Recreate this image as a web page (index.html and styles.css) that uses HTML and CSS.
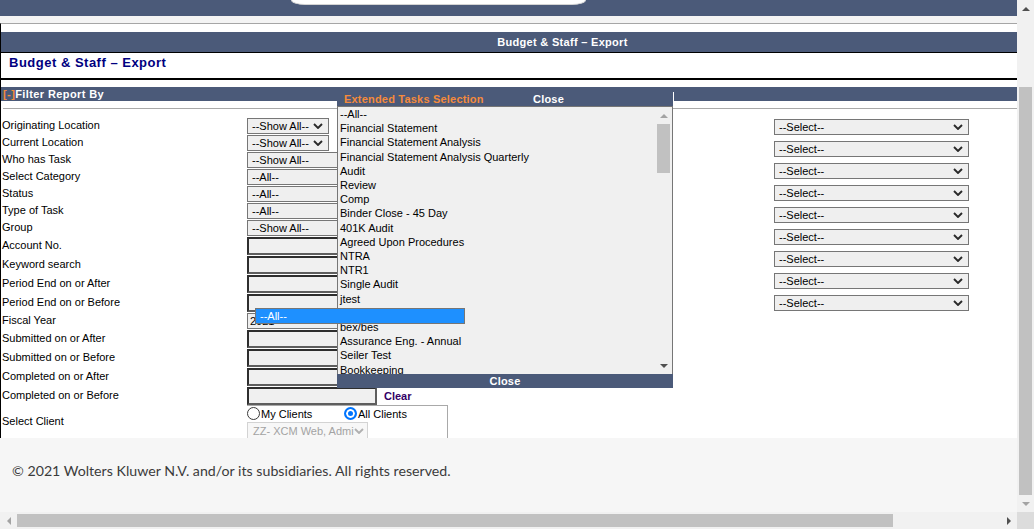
FILE: index.html
```html
<!DOCTYPE html>
<html>
<head>
<meta charset="utf-8">
<title>Budget &amp; Staff – Export</title>
<link rel="stylesheet" href="styles.css">
</head>
<body>
<div class="viewport">
  <div class="page">
    <div class="topbar"><div class="searchbox"></div></div>
    <div class="band"></div>
    <div class="content">
      <div class="titlebar">Budget &amp; Staff – Export</div>
      <div class="heading">Budget &amp; Staff – Export</div>
      <div class="filterbar"><span class="toggle">[-]</span>Filter Report By</div>
      <div class="filterline"></div>
      <div class="filter-body">
        <div class="form-grid">
          <div class="lbl">Originating Location</div>
          <div class="ctl"><div class="select w82"><span>--Show All--</span><svg class="chev" viewBox="0 0 10 6" width="10" height="6"><polyline points="1,1 5,5 9,1"/></svg></div></div>
          <div class="lbl">Current Location</div>
          <div class="ctl"><div class="select w82"><span>--Show All--</span><svg class="chev" viewBox="0 0 10 6" width="10" height="6"><polyline points="1,1 5,5 9,1"/></svg></div></div>
          <div class="lbl">Who has Task</div>
          <div class="ctl"><div class="select w120"><span>--Show All--</span></div></div>
          <div class="lbl">Select Category</div>
          <div class="ctl"><div class="select w120"><span>--All--</span></div></div>
          <div class="lbl">Status</div>
          <div class="ctl"><div class="select w120"><span>--All--</span></div></div>
          <div class="lbl">Type of Task</div>
          <div class="ctl"><div class="select w120"><span>--All--</span></div></div>
          <div class="lbl">Group</div>
          <div class="ctl"><div class="select w120"><span>--Show All--</span></div></div>
          <div class="lbl">Account No.</div>
          <div class="ctl"><div class="input"></div></div>
          <div class="lbl">Keyword search</div>
          <div class="ctl"><div class="input"></div></div>
          <div class="lbl">Period End on or After</div>
          <div class="ctl"><div class="input"></div></div>
          <div class="lbl">Period End on or Before</div>
          <div class="ctl"><div class="input"></div></div>
          <div class="lbl">Fiscal Year</div>
          <div class="ctl"><div class="select w120 fiscal"><span>2021</span></div></div>
          <div class="lbl">Submitted on or After</div>
          <div class="ctl"><div class="input"></div></div>
          <div class="lbl">Submitted on or Before</div>
          <div class="ctl"><div class="input"></div></div>
          <div class="lbl">Completed on or After</div>
          <div class="ctl"><div class="input"></div></div>
          <div class="lbl">Completed on or Before</div>
          <div class="ctl"><div class="input"></div><span class="clear">Clear</span></div>
          <div class="lbl">Select Client</div>
          <div class="ctl top">
            <div class="clientbox">
              <div class="radios">
                <span class="radio-item first"><span class="radio"></span>My Clients</span>
                <span class="radio-item"><span class="radio checked"></span>All Clients</span>
              </div>
              <div class="select disabled"><span>ZZ- XCM Web, Admi</span><svg class="chev" viewBox="0 0 10 6" width="10" height="6"><polyline points="1,1 5,5 9,1"/></svg></div>
            </div>
          </div>
        </div>
        <div class="right-col">
          <div class="select wide"><span>--Select--</span><svg class="chev" viewBox="0 0 10 6" width="10" height="6"><polyline points="1,1 5,5 9,1"/></svg></div>
          <div class="select wide"><span>--Select--</span><svg class="chev" viewBox="0 0 10 6" width="10" height="6"><polyline points="1,1 5,5 9,1"/></svg></div>
          <div class="select wide"><span>--Select--</span><svg class="chev" viewBox="0 0 10 6" width="10" height="6"><polyline points="1,1 5,5 9,1"/></svg></div>
          <div class="select wide"><span>--Select--</span><svg class="chev" viewBox="0 0 10 6" width="10" height="6"><polyline points="1,1 5,5 9,1"/></svg></div>
          <div class="select wide"><span>--Select--</span><svg class="chev" viewBox="0 0 10 6" width="10" height="6"><polyline points="1,1 5,5 9,1"/></svg></div>
          <div class="select wide"><span>--Select--</span><svg class="chev" viewBox="0 0 10 6" width="10" height="6"><polyline points="1,1 5,5 9,1"/></svg></div>
          <div class="select wide"><span>--Select--</span><svg class="chev" viewBox="0 0 10 6" width="10" height="6"><polyline points="1,1 5,5 9,1"/></svg></div>
          <div class="select wide"><span>--Select--</span><svg class="chev" viewBox="0 0 10 6" width="10" height="6"><polyline points="1,1 5,5 9,1"/></svg></div>
          <div class="select wide"><span>--Select--</span><svg class="chev" viewBox="0 0 10 6" width="10" height="6"><polyline points="1,1 5,5 9,1"/></svg></div>
        </div>
      </div>

      <div class="popup">
        <div class="popup-head"><span class="popup-title">Extended Tasks Selection</span><span class="popup-close">Close</span></div>
        <div class="listbox">
          <div class="list-items">
            <div>--All--</div>
            <div>Financial Statement</div>
            <div>Financial Statement Analysis</div>
            <div>Financial Statement Analysis Quarterly</div>
            <div>Audit</div>
            <div>Review</div>
            <div>Comp</div>
            <div>Binder Close - 45 Day</div>
            <div>401K Audit</div>
            <div>Agreed Upon Procedures</div>
            <div>NTRA</div>
            <div>NTR1</div>
            <div>Single Audit</div>
            <div>jtest</div>
            <div class="hidden-item">Tax Return</div>
            <div>bex/bes</div>
            <div>Assurance Eng. - Annual</div>
            <div>Seiler Test</div>
            <div>Bookkeeping</div>
          </div>
          <div class="list-scroll">
            <div class="lbtn"><span class="tri-up light"></span></div>
            <div class="lthumb"></div>
            <div class="lfill"></div>
            <div class="lbtn"><span class="tri-down dark"></span></div>
          </div>
        </div>
        <div class="close-bar">Close</div>
      </div>

      <div class="dropdown">--All--</div>
    </div>
    <div class="footer">© 2021 Wolters Kluwer N.V. and/or its subsidiaries. All rights reserved.</div>
  </div>
  <div class="vscroll">
    <div class="sbtn"><span class="tri-up dark"></span></div>
    <div class="vthumb"></div>
    <div class="sbtn"><span class="tri-down light"></span></div>
  </div>
  <div class="hscroll">
    <div class="hbtn"><span class="tri-left light"></span></div>
    <div class="hthumb"></div>
    <div class="hfill"></div>
    <div class="hbtn"><span class="tri-right dark"></span></div>
  </div>
  <div class="corner"></div>
</div>
</body>
</html>
```

FILE: styles.css
```css
* { box-sizing: border-box; }
html, body { margin: 0; padding: 0; }
body {
  font-family: "Liberation Sans", Arial, sans-serif;
  font-size: 11px;
  color: #000;
  background: #fff;
  overflow: hidden;
}
.viewport {
  display: grid;
  grid-template-columns: 1017px 17px;
  grid-template-rows: 512px 17px;
  width: 1034px;
  height: 529px;
}
.page {
  width: 1017px;
  height: 512px;
  overflow: hidden;
  display: flex;
  flex-direction: column;
}
.topbar {
  flex: none;
  width: 1124px;
  height: 16px;
  background: #4b5a79;
  padding-left: 291px;
}
.searchbox {
  width: 295px;
  height: 5px;
  background: #fff;
  border: 1px solid #d4d4d4;
  border-top: 0;
  border-radius: 0 0 14px 14px / 0 0 5px 5px;
}
.band { flex: none; height: 7px; background: #f4f4f4; }
.content {
  flex: none;
  position: relative;
  width: 1124px;
  height: 415px;
  border-top: 1px solid #a6a6a6;
  border-left: 1px solid #000;
  background: #fff;
  padding-top: 8px;
  overflow: hidden;
}
.titlebar {
  height: 21px;
  line-height: 20px;
  background: #4b5a79;
  border-bottom: 1px solid #000;
  color: #fff;
  font-weight: bold;
  font-size: 11px;
  letter-spacing: 0.3px;
  text-align: center;
}
.heading {
  height: 27px;
  border-bottom: 2px solid #000;
  padding: 1px 0 0 8px;
  line-height: 17px;
  font-size: 13px;
  font-weight: bold;
  letter-spacing: 0.5px;
  color: #000080;
}
.filterbar {
  margin-top: 7px;
  height: 14px;
  line-height: 14px;
  background: #4b5a79;
  color: #fff;
  font-weight: bold;
  font-size: 11px;
  letter-spacing: 0.4px;
  padding-left: 2px;
}
.toggle { color: #f58a3c; }
.filterline {
  margin: 7px 0 0 2px;
  height: 1px;
  background: #a9a9a9;
}
.filter-body {
  margin-top: 8px;
  display: flex;
  padding-left: 1px;
}
.form-grid {
  display: grid;
  grid-template-columns: 245px 527px;
  grid-template-rows: repeat(7, 17px) repeat(4, 19px) 17px repeat(4, 19px) 33px;
}
.lbl {
  display: flex;
  align-items: center;
  padding-bottom: 2px;
  white-space: nowrap;
}
.ctl {
  display: flex;
  align-items: center;
}
.ctl.top { align-items: flex-start; }
.select {
  display: flex;
  align-items: center;
  justify-content: space-between;
  height: 16px;
  border: 1px solid #767676;
  background: #efefef;
  padding: 0 5px 0 4px;
  white-space: nowrap;
  overflow: hidden;
}
.chev { flex: none; fill: none; stroke: #2a2a2a; stroke-width: 1.9; }
.w82 { width: 82px; }
.w120 { width: 120px; }
.fiscal { padding-left: 2px; }
.input {
  width: 130px;
  height: 18px;
  background: #f0f0f0;
  border: 2px solid;
  border-color: #2e2e2e #5e5e5e #5e5e5e #2e2e2e;
}
.clear {
  margin-left: 7px;
  font-weight: bold;
  color: #330066;
}
.clientbox {
  width: 201px;
  height: 33px;
  border-top: 1px solid #a9a9a9;
  border-right: 1px solid #a9a9a9;
}
.radios {
  display: flex;
  height: 15px;
  align-items: center;
}
.radio-item { display: flex; align-items: center; }
.radio-item.first { width: 97px; }
.radio {
  width: 13px;
  height: 13px;
  border-radius: 50%;
  border: 1px solid #3b3b3b;
  background: #fff;
  margin-right: 1px;
}
.radio.checked {
  border: 2px solid #0075ff;
  background: #0075ff;
  box-shadow: inset 0 0 0 2px #fff;
}
.select.disabled {
  width: 121px;
  height: 17px;
  margin-top: 1px;
  border-color: #d3d3d3;
  background: #f7f7f7;
  color: #a3a3a3;
  padding-left: 5px;
}
.select.disabled .chev { stroke: #b0b0b0; }
.right-col {
  display: flex;
  flex-direction: column;
  gap: 6px;
  padding-top: 2px;
}
.select.wide { width: 195px; }

/* popup */
.popup {
  position: absolute;
  left: 336px;
  top: 68px;
  width: 337px;
  z-index: 1;
}
.popup-head {
  display: flex;
  height: 14px;
  line-height: 14px;
  background: #4b5a79;
  border-right: 1px solid #fff;
  padding-left: 7px;
  font-weight: bold;
  font-size: 11px;
  letter-spacing: 0.2px;
}
.popup-title { color: #f58a3c; width: 189px; }
.popup-close { color: #fff; }
.listbox {
  display: flex;
  width: 336px;
  height: 268px;
  border: 1px solid #767676;
  border-bottom: 0;
  background: #f0f0f0;
  overflow: hidden;
}
.list-items {
  flex: 1;
  padding-left: 2px;
  line-height: 14.2px;
  white-space: nowrap;
}
.list-scroll {
  flex: none;
  width: 17px;
  display: flex;
  flex-direction: column;
  align-items: center;
}
.lbtn {
  flex: none;
  height: 17px;
  width: 17px;
  display: flex;
  align-items: center;
  justify-content: center;
}
.lthumb { flex: none; width: 13px; height: 49px; background: #c1c1c1; }
.lfill { flex: 1; }
.close-bar {
  width: 336px;
  height: 14px;
  line-height: 14px;
  background: #4b5a79;
  color: #fff;
  font-weight: bold;
  text-align: center;
  letter-spacing: 0.2px;
}
.dropdown {
  position: absolute;
  left: 254px;
  top: 284px;
  width: 210px;
  height: 16px;
  line-height: 14px;
  border: 1px solid #767676;
  background: #1e90ff;
  color: #fff;
  padding-left: 4px;
  z-index: 2;
}

/* footer */
.footer {
  flex: none;
  width: 1017px;
  height: 74px;
  background: #f6f6f6;
  padding: 24px 0 0 12px;
  font-family: Lato, "Liberation Sans", sans-serif;
  font-size: 14.2px;
  line-height: 18px;
  color: #3b3b3b;
  white-space: nowrap;
}

/* scrollbars */
.vscroll {
  background: #f1f1f1;
  display: flex;
  flex-direction: column;
  align-items: center;
}
.sbtn {
  flex: none;
  width: 17px;
  height: 17px;
  display: flex;
  align-items: center;
  justify-content: center;
}
.vthumb {
  flex: none;
  width: 13px;
  height: 408px;
  margin-top: 70px;
  background: #c1c1c1;
}
.hscroll {
  background: #f1f1f1;
  display: flex;
  align-items: center;
}
.hbtn {
  flex: none;
  width: 17px;
  height: 17px;
  display: flex;
  align-items: center;
  justify-content: center;
}
.hthumb { flex: none; width: 876px; height: 13px; background: #c1c1c1; }
.hfill { flex: 1; }
.corner { background: #dcdcdc; }

.tri-up, .tri-down, .tri-left, .tri-right { width: 0; height: 0; display: block; }
.tri-up { border-left: 4px solid transparent; border-right: 4px solid transparent; border-bottom: 4px solid #505050; }
.tri-down { border-left: 4px solid transparent; border-right: 4px solid transparent; border-top: 4px solid #505050; }
.tri-left { border-top: 4px solid transparent; border-bottom: 4px solid transparent; border-right: 4px solid #505050; }
.tri-right { border-top: 4px solid transparent; border-bottom: 4px solid transparent; border-left: 4px solid #505050; }
.tri-up.light { border-bottom-color: #a3a3a3; }
.tri-down.light { border-top-color: #a3a3a3; }
.tri-left.light { border-right-color: #a3a3a3; }
.tri-right.light { border-left-color: #a3a3a3; }
```
